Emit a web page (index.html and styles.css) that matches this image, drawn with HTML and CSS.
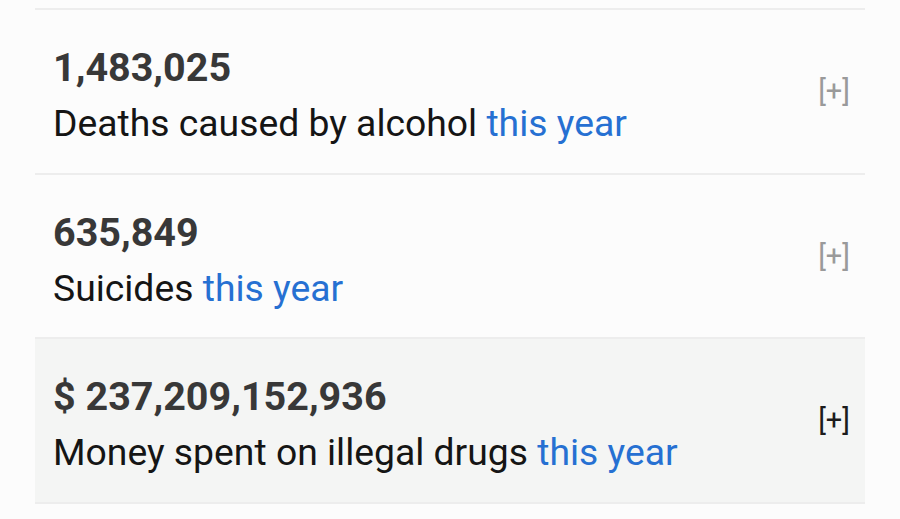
FILE: index.html
```html
<!DOCTYPE html>
<html lang="en">
<head>
    <meta charset="UTF-8">
    <meta name="viewport" content="width=device-width, initial-scale=1.0">
    <title>Counters</title>
    <link rel="stylesheet" href="styles.css">
</head>
<body>
    <div class="stat-list">
        <div class="stat-row">
            <div class="stat-text">
                <div class="stat-value">1,483,025</div>
                <div class="stat-label">Deaths caused by alcohol <span class="period">this year</span></div>
            </div>
            <span class="expand">[+]</span>
        </div>
        <div class="stat-row">
            <div class="stat-text">
                <div class="stat-value">635,849</div>
                <div class="stat-label">Suicides <span class="period">this year</span></div>
            </div>
            <span class="expand">[+]</span>
        </div>
        <div class="stat-row active">
            <div class="stat-text">
                <div class="stat-value">$ 237,209,152,936</div>
                <div class="stat-label">Money spent on illegal drugs <span class="period">this year</span></div>
            </div>
            <span class="expand">[+]</span>
        </div>
    </div>
</body>
</html>
```

FILE: styles.css
```css
body {
    margin: 0;
    padding-top: 8px;
    background-color: #fcfcfc;
    font-family: Roboto, "Noto Sans", sans-serif;
}
.stat-list {
    margin: 0 35px;
    border-top: 2px solid #ededed;
}
.stat-row {
    display: flex;
    align-items: center;
    justify-content: space-between;
    height: 162.5px;
    box-sizing: content-box;
    padding: 0 15px 0 18px;
    border-bottom: 2px solid #ededed;
}
.stat-row.active {
    background-color: #f4f5f4;
}
.stat-text {
    display: flex;
    flex-direction: column;
    margin-top: 17px;
}
.stat-value {
    font-size: 39.5px;
    font-weight: bold;
    line-height: 48px;
    color: #383838;
}
.stat-label {
    font-size: 37.3px;
    line-height: 63px;
    color: #151515;
}
.period {
    color: #2670d2;
}
.expand {
    font-size: 29px;
    color: #9a9a9a;
}
.active .expand {
    color: #1c1c1c;
}
```
